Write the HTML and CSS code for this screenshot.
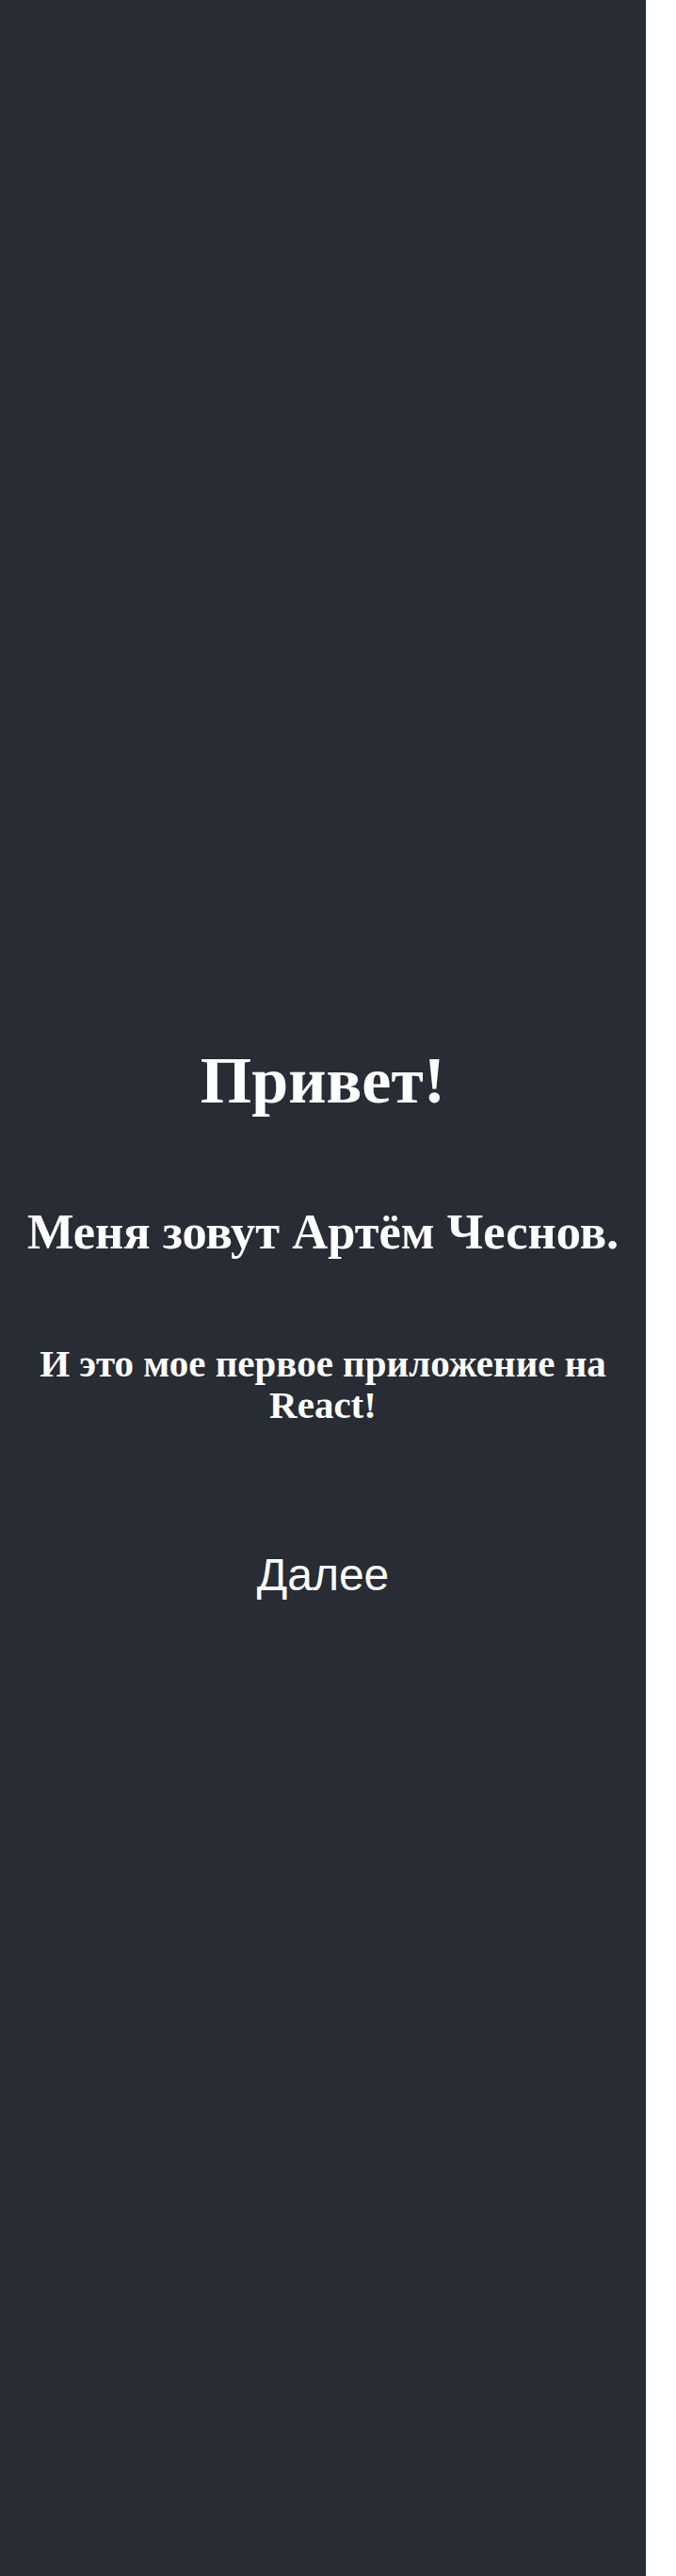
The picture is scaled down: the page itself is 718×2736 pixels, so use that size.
FILE: index.html
```html
<!DOCTYPE html>
<html lang="ru">
<head>
<meta charset="utf-8">
<title>React App</title>
<link rel="stylesheet" href="styles.css">
</head>
<body>
<div class="app">
  <header class="app-header">
    <h1 class="title">Привет!</h1>
    <h2 class="subtitle">Меня зовут Артём Чеснов.</h2>
    <h3 class="note">И это мое первое приложение на React!</h3>
    <button class="next" type="button">Далее</button>
  </header>
</div>
</body>
</html>
```
FILE: styles.css
```css
html, body {
  margin: 0;
  padding: 0;
  background: #ffffff;
}
.app {
  width: 686px;
  text-align: center;
}
.app-header {
  background-color: #282c34;
  min-height: 2736px;
  display: flex;
  flex-direction: column;
  align-items: center;
  justify-content: center;
  color: #ffffff;
  font-family: "Liberation Serif", "Times New Roman", serif;
}
.title {
  font-size: 70px;
  line-height: 80px;
  font-weight: bold;
  margin: 71px 0 90px;
}
.subtitle {
  font-size: 52.5px;
  line-height: 60px;
  font-weight: bold;
  margin: 0 0 88px;
}
.note {
  font-size: 41px;
  line-height: 44px;
  font-weight: bold;
  margin: 0 0 131px;
}
.next {
  background: transparent;
  border: none;
  color: #ffffff;
  font-family: "Liberation Sans", Arial, sans-serif;
  font-size: 48px;
  line-height: 55px;
  padding: 0;
  margin: 0;
  cursor: pointer;
}
```
